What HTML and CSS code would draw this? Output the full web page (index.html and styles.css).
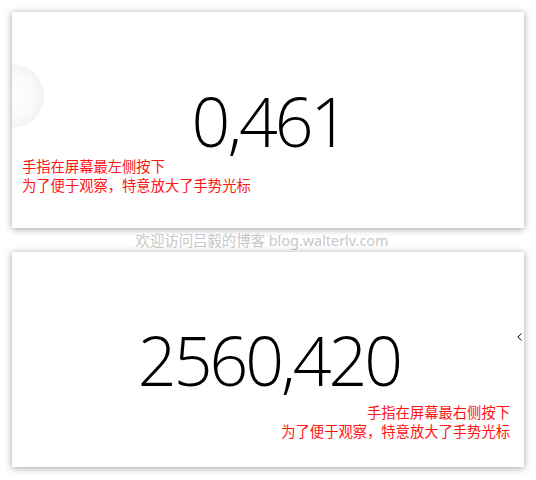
FILE: index.html
```html
<!DOCTYPE html>
<html lang="zh-CN">
<head>
<meta charset="utf-8">
<title>Touch gesture demo</title>
<link rel="stylesheet" href="styles.css">
</head>
<body>
<div class="page">
  <section class="panel panel-left">
    <div class="touch-circle"></div>
    <div class="value">0,461</div>
    <div class="note note-left">
      <div>手指在屏幕最左侧按下</div>
      <div>为了便于观察，特意放大了手势光标</div>
    </div>
  </section>
  <div class="caption">欢迎访问吕毅的博客 blog.walterlv.com</div>
  <section class="panel panel-right">
    <div class="value">2560,420</div>
    <svg class="edge-cursor" width="6" height="8" viewBox="0 0 6 8"><polyline points="4.5,0.5 0.8,4 4.5,7.5" fill="none" stroke="#000" stroke-width="1"/></svg>
    <div class="note note-right">
      <div>手指在屏幕最右侧按下</div>
      <div>为了便于观察，特意放大了手势光标</div>
    </div>
  </section>
</div>
</body>
</html>
```

FILE: styles.css
```css
html, body {
  margin: 0;
  padding: 0;
  background: #ffffff;
}

.page {
  padding: 12px 12px 12px 12px;
  display: flex;
  flex-direction: column;
}

.panel {
  width: 512px;
  height: 216px;
  flex: none;
  background: #ffffff;
  box-shadow: 0 1px 7px rgba(0, 0, 0, 0.38);
  display: grid;
  grid-template-columns: 1fr;
  grid-template-rows: 1fr;
  overflow: hidden;
}

.panel > * {
  grid-area: 1 / 1;
}

.panel-right {
  height: 215px;
}

.value {
  align-self: center;
  justify-self: center;
  font-family: "Open Sans", "Noto Sans", sans-serif;
  font-weight: 300;
  font-size: 68px;
  letter-spacing: -3px;
  line-height: 1;
  color: #000;
  margin-left: 2px;
}

.panel-left .value {
  margin-top: 2px;
  margin-left: 2px;
}

.touch-circle {
  width: 64px;
  height: 64px;
  border-radius: 50%;
  margin-left: -32px;
  margin-top: 52px;
  align-self: start;
  justify-self: start;
  background: radial-gradient(circle at 50% 50%, #ffffff 0%, #fafafa 45%, #ececec 100%);
}

.note {
  font-family: "Noto Sans CJK SC", "Noto Sans", sans-serif;
  font-size: 14.3px;
  line-height: 19px;
  color: #ff1414;
  align-self: end;
}

.note-left {
  justify-self: start;
  margin-left: 10px;
  margin-bottom: 34px;
}

.note-right {
  justify-self: end;
  text-align: right;
  margin-right: 14px;
  margin-bottom: 27px;
}

.edge-cursor {
  align-self: start;
  justify-self: end;
  margin-top: 81px;
  margin-right: 1px;
}

.caption {
  height: 24px;
  line-height: 24px;
  text-align: center;
  font-family: "Noto Sans", "Noto Sans CJK SC", sans-serif;
  font-size: 14.4px;
  color: #c8c8c8;
  padding-top: 1px;
  padding-right: 12px;
  box-sizing: border-box;
}
```
